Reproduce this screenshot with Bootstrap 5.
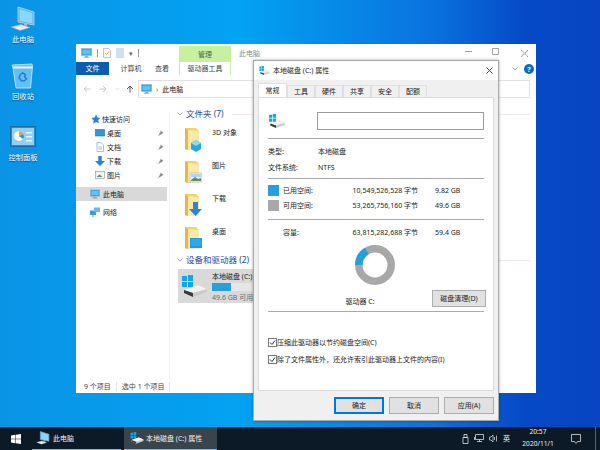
<!DOCTYPE html>
<html lang="zh-CN">
<head>
  <meta charset="UTF-8">
  <title>本地磁盘 (C:) 属性</title>
  <link href="https://cdn.jsdelivr.net/npm/bootstrap@5.3.0/dist/css/bootstrap.min.css" rel="stylesheet">
  <style>
    html, body { height: 100%; margin: 0; }
    body {
      width: 600px; height: 450px; overflow: hidden; position: relative;
      font-family: "Noto Sans", "Noto Sans CJK SC", sans-serif;
      font-size: 7px; line-height: 1; color: #222;
      background: linear-gradient(90deg, #0a94e6 0, #03a2f2 40%, #0a72de 72%, #0549c6 88%, #0745c2 100%);
    }
    svg { display: block; flex: none; }

    /* desktop */
    .desk-icon { position: absolute; left: 0; width: 46px; color: #fff; text-shadow: 0 1px 1px #0008; font-size: 7.3px; }
    .desk-pc { top: 6px; }
    .desk-bin { top: 63px; }
    .desk-cp { top: 124px; }
    .desk-img { width: 26px; height: 26px; margin-bottom: 4px; }

    /* explorer window */
    .xp-win { position: absolute; left: 76px; top: 44px; width: 460px; height: 349px; background: #fff; }
    .xp-title { height: 18px; }
    .xp-qa { width: 103px; padding-left: 5px; gap: 5px; }
    .xp-sep { width: 1px; height: 8px; background: #999; }
    .xp-manage { width: 52px; margin-top: 2px; height: 16px; background: #c7f0a0; color: #4c6a44; }
    .xp-caption { padding-left: 8px; color: #8a8a8a; }
    .win-btn { position: absolute; top: 4px; }
    .btn-min { left: 389px; }
    .btn-max { left: 416px; }
    .btn-close { left: 443px; }
    .xp-tabs { height: 13px; }
    .xp-tab { height: 13px; color: #444; }
    .tab-file { width: 33px; background: #0a5cb0; color: #fff; }
    .tab-pc { width: 44px; }
    .tab-view { width: 18px; }
    .tab-tool { width: 52px; margin-left: 8px; border: 1px solid #cde8b0; border-top: 0; border-bottom: 0; }
    .xp-help { position: absolute; left: 448px; top: 20px; width: 10px; height: 10px; border-radius: 50%; background: #0b6cc4; color: #fff; font-size: 7px; font-weight: 700; }
    .xp-chev { position: absolute; left: 436px; top: 23px; }
    .xp-nav { height: 18px; margin-top: 5px; }
    .nav-arrows { width: 62px; padding-left: 7px; gap: 8px; }
    .nav-up { margin-left: -2px; }
    .addr { width: 392px; height: 18px; border: 1px solid #e4dfe3; padding-left: 2px; gap: 4px; }
    .addr-arrow { color: #666; font-size: 7px; }
    .xp-main { height: 270px; margin-top: 13px; }
    .xp-side { width: 91px; padding-top: 1px; }
    .side-line { width: 1px; margin-left: 2px; background: #f2f2f2; }
    .side-row { height: 14px; gap: 3px; }
    .side-head { padding-left: 15px; gap: 1px; }
    .side-item { padding-left: 19px; padding-right: 1px; gap: 2px; }
    .side-pin { margin-left: auto; margin-right: 2px; }
    .side-pc { margin-top: 5px; padding-left: 14px; background: #d9d9d9; }
    .side-net { margin-top: 4px; padding-left: 14px; }
    .side-img { width: 10px; height: 10px; }
    .xp-body { padding-left: 7px; flex: 1; min-width: 0; margin-top: -3px; }
    .grp-head { height: 12px; margin-bottom: 3px; color: #1f4a9c; font-size: 8.5px; gap: 3px; }
    .grp-line { flex: 1; height: 1px; margin: 0 5px; background: #f0e8ee; }
    .folder-tile { height: 33px; gap: 10px; padding-left: 8px; align-items: flex-start; padding-top: 6px; }
    .folder-img { width: 17px; height: 26px; margin-top: -3px; }
    .grp-devices { margin-top: -1px; margin-bottom: 0; }
    .drive-tile { width: 75px; height: 34px; margin-top: 3px; margin-left: 1px; background: #d9d9d9; padding-left: 3px; gap: 4px; white-space: nowrap; }
    .drive-img { width: 27px; height: 22px; margin-top: 6px; }
    .drive-info { padding-top: 4px; width: 42px; }
    .drive-bar { height: 8px; margin: 3px 0; border-radius: 0; background: #e6e6e6; }
    .drive-bar .progress-bar { background: #26a0da; }
    .drive-free { color: #6d6d6d; }
    .xp-status { height: 14px; padding-left: 8px; color: #444; }
    .status-sep { width: 1px; height: 9px; background: #e3e3e3; margin: 0 5px; }

    /* properties dialog */
    .prop-win { position: absolute; left: 253px; top: 60px; width: 246px; height: 361px; background: #f0f0f0; border: 1px solid #a8a8a8; box-shadow: 0 0 3px #0005; }
    .prop-title { height: 19px; background: #fff; padding-left: 5px; gap: 3px; }
    .prop-close { margin-left: auto; margin-right: 5px; }
    .prop-tabs { margin: 4px 0 0 4px; height: 13px; }
    .prop-tab { width: 28px; height: 12px; margin-top: 1px; background: #f0f0f0; border: 1px solid #e0e0e0; border-bottom: 0; color: #222; }
    .prop-tab.cur { width: 29px; height: 14px; margin-top: -1px; background: #fff; position: relative; z-index: 1; }
    .prop-panel { margin-left: 4px; width: 236px; height: 294px; background: #fff; border: 1px solid #dcdcdc; padding: 14px 9px 0 9px; }
    .prop-drive { height: 18px; }
    .prop-drive-img { width: 18px; height: 14px; margin-right: 31px; }
    .prop-name { width: 168px; height: 18px; border: 1px solid #9b9b9b; }
    .prop-sep { height: 1px; background: #a9a9a9; width: 216px; }
    .sep-a { margin-top: 8px; margin-bottom: 4px; }
    .sep-b { margin-top: 3px; margin-bottom: 4px; }
    .sep-c { margin-top: 6px; margin-bottom: 5px; }
    .info-row { height: 16px; }
    .info-key { width: 50px; }
    .space-row { height: 15px; }
    .swatch { width: 11px; height: 11px; margin-right: 4px; }
    .sw-used { background: #26a0da; }
    .sw-free { background: #a8a8a8; }
    .sp-name { width: 50px; }
    .sp-val { width: 85px; text-align: right; }
    .sp-gb { margin-left: 17px; }
    .sp-blank { width: 15px; }
    .donut-wrap { width: 216px; margin-top: 5px; padding-right: 2px; }
    .clean-row { height: 17px; margin-top: 5px; width: 218px; }
    .clean-label { width: 164px; padding-left: 20px; padding-top: 8px; }
    .clean-btn { width: 54px; height: 17px; padding: 0; border-radius: 0; font-size: 7px; background: #e1e1e1; border: 1px solid #adadad; color: #222; line-height: 1; }
    .sep-d { margin-top: 4px; }
    .chk-row { height: 17px; }
    .chk-first { margin-top: 22px; }
    .chk-box { width: 9px; height: 9px; border: 1px solid #777; background: #fff; }
    .prop-foot { margin-top: 6px; padding-right: 4px; gap: 5px; }
    .foot-btn { width: 50px; height: 17px; padding: 0; border-radius: 0; font-size: 7px; background: #e1e1e1; border: 1px solid #adadad; color: #222; line-height: 1; }
    .foot-ok { border: 2px solid #0078d7; }

    /* taskbar */
    .taskbar { position: absolute; left: 0; right: 0; bottom: 0; height: 23px; background: #0b1a26; color: #f2f2f2; }
    .tb-start { width: 29px; padding-left: 3px; }
    .tb-item { height: 23px; gap: 3px; border-bottom: 1px solid #76b9ed; margin-left: 3px; }
    .tb-pc { width: 89px; padding-left: 4px; }
    .tb-prop { width: 93px; padding-left: 6px; gap: 2px; background: #39444c; }
    .tb-tray { margin-left: auto; gap: 5px; }
    .tb-clock { width: 40px; gap: 5px; margin: 0 8px 0 3px; font-size: 6.6px; }
    .tb-end { width: 5px; height: 23px; margin-left: 9px; border-left: 1px solid #55616b; }
  </style>
</head>
<body>
  <svg width="0" height="0" class="position-absolute">
    <defs>
      <symbol id="i-pc" viewBox="0 0 16 14">
        <rect x=".5" y=".5" width="15" height="10" fill="#1f9ae0" stroke="#9fb6c6"/>
        <path d="M2 2h12v7H2z" fill="#5cc3f2"/>
        <path d="M6 11h4v1.5H6zM4 12.5h8V14H4z" fill="#9aa4ac"/>
      </symbol>
      <symbol id="i-pc-big" viewBox="0 0 26 26">
        <path d="M8 1l16 5v13l-16-3z" fill="#4fb4ee" stroke="#c9d5df" stroke-width=".8"/>
        <path d="M9.500 3l13 4v10.500l-13-2.500z" fill="#8ed6f8"/>
        <path d="M14 17.500l3 .6v2l-3-.6z" fill="#aeb9c2"/>
        <path d="M1 21l10-2.500 9 3-10 3z" fill="#e8ecef" stroke="#9aa4ac" stroke-width=".5"/>
      </symbol>
      <symbol id="i-bin" viewBox="0 0 26 26">
        <path d="M2 2l20-1 .5 3-2 21H6L3 5z" fill="#9fdcf8" fill-opacity=".6" stroke="#e6f5fd" stroke-width=".7"/>
        <path d="M2.500 3.500h20l-.5 2H3z" fill="#e9f6fd"/>
        <path d="M12.500 10l3 1.500-1 2 2 2.500-2.500 2-3-.5-2-3 1.500-3z" fill="none" stroke="#1f7fd0" stroke-width="1.500"/>
      </symbol>
      <symbol id="i-cp" viewBox="0 0 26 22">
        <rect x=".5" y=".5" width="25" height="20" fill="#2a8cc8" stroke="#1a6aa4"/>
        <rect x="2" y="2" width="22" height="17" fill="#8fd0f4"/>
        <circle cx="9" cy="10" r="5" fill="#fff"/>
        <path d="M9 10V5a5 5 0 0 1 4.500 3z" fill="#f0a030"/>
        <path d="M9 10l4.500-2A5 5 0 0 1 13 13z" fill="#2a8fd8"/>
        <path d="M16 6h6v1.500h-6zM16 10h6v1.500h-6zM16 14h6v1.500h-6z" fill="#e4f4fc"/>
      </symbol>
      <symbol id="i-folder" viewBox="0 0 17 26">
        <path d="M0 2h11l3 3v19H3l-3-1z" fill="#f4d264"/>
        <path d="M3 4l11 1v19H3z" fill="#fbe9a8"/>
        <path d="M0 2l3 2v20l-3-1z" fill="#e2b84a"/>
      </symbol>
      <symbol id="i-drive" viewBox="0 0 27 22">
        <path d="M1 1h5v5H1zM7 0l5-.5V6H7zM1 7h5v5H1zM7 7h5v5.500l-5-.5z" fill="#12a5e8"/>
        <path d="M3 15l14-5 9 4v3L12 22l-9-4z" fill="#c9c9c9"/>
        <path d="M3 15l9 3 14-4-9-4z" fill="#f2f2f2"/>
        <path d="M3 15l9 3v4l-9-4z" fill="#3b3b3b"/>
      </symbol>
      <symbol id="i-win" viewBox="0 0 10 10">
        <path d="M0 1.400l4.300-.6v3.900H0zM4.800.7L10 0v4.700H4.800zM0 5.300h4.300v3.900L0 8.600zM4.800 5.300H10V10l-5.200-.7z" fill="#fff"/>
      </symbol>
      <symbol id="i-pin" viewBox="0 0 8 8">
        <path d="M4 .5l3.500 3-1.500.5-1.500 1.500-.5-.5L1 7.500l2-3.500-.5-.5L4 2.500z" fill="#8a8a8a"/>
      </symbol>
      <symbol id="i-star" viewBox="0 0 10 10">
        <path d="M5 .5l1.400 3 3.100.4-2.300 2.100.7 3.300L5 8.100 2.100 9.800l.7-3.300L.5 3.900l3.100-.4z" fill="#2b7fd6"/>
      </symbol>
      <symbol id="i-screen" viewBox="0 0 10 8">
        <rect x=".5" y=".5" width="9" height="6.500" fill="#2f96e4" stroke="#1c6cb4" stroke-width=".6"/>
      </symbol>
      <symbol id="i-doc" viewBox="0 0 10 10">
        <path d="M2 .5h4l2.500 2.500v6.500H2z" fill="#fff" stroke="#8aa8c4" stroke-width=".7"/>
        <path d="M3.500 5h3.500M3.500 7h3.500" stroke="#6aa0d0" stroke-width=".7"/>
      </symbol>
      <symbol id="i-props" viewBox="0 0 8 10">
        <path d="M.5.500h5l2 2v7h-7z" fill="#fff" stroke="#a8a8a8" stroke-width=".7"/>
        <path d="M2 5l1.500 1.500L6 3.500" fill="none" stroke="#e08a30" stroke-width=".9"/>
      </symbol>
      <symbol id="i-page" viewBox="0 0 8 10">
        <path d="M0 0h8v10H0z" fill="#cfe0f2"/>
      </symbol>
      <symbol id="i-down" viewBox="0 0 10 10">
        <path d="M3.300 0h3.400v5H10L5 10 0 5h3.300z" fill="#2b7fd6"/>
      </symbol>
      <symbol id="i-pic" viewBox="0 0 10 8">
        <rect x=".5" y=".5" width="9" height="7" fill="#f4f4f4" stroke="#8d8d8d" stroke-width=".6"/>
        <path d="M1.500 6l3-2.500 3 2.500z" fill="#5e8a9c"/>
      </symbol>
      <symbol id="i-net" viewBox="0 0 10 9">
        <rect x="0" y="3" width="6" height="4.500" fill="#3c9be0"/>
        <rect x="4" y="0" width="6" height="4.500" fill="#68b9ee"/>
        <path d="M2 8h2v1H2z" fill="#888"/>
      </symbol>
    </defs>
  </svg>

  <div class="desk-icon desk-pc d-flex flex-column align-items-center">
    <svg class="desk-img"><use href="#i-pc-big"/></svg>
    <span>此电脑</span>
  </div>
  <div class="desk-icon desk-bin d-flex flex-column align-items-center">
    <svg class="desk-img"><use href="#i-bin"/></svg>
    <span>回收站</span>
  </div>
  <div class="desk-icon desk-cp d-flex flex-column align-items-center">
    <svg class="desk-img"><use href="#i-cp"/></svg>
    <span>控制面板</span>
  </div>

  <div class="xp-win d-flex flex-column">
    <div class="xp-title d-flex align-items-stretch">
      <div class="xp-qa d-flex align-items-center">
        <svg width="11" height="10"><use href="#i-pc"/></svg>
        <div class="xp-sep"></div>
        <svg width="8" height="10"><use href="#i-props"/></svg>
        <svg width="8" height="10"><use href="#i-page"/></svg>
        <span class="addr-arrow">▾</span>
        <div class="xp-sep"></div>
      </div>
      <div class="xp-manage d-flex align-items-center justify-content-center">管理</div>
      <div class="xp-caption d-flex align-items-center">此电脑</div>
    </div>
    <svg class="win-btn btn-min" width="7" height="7" viewBox="0 0 7 7"><path d="M0 3.500h7" stroke="#8a8a8a" stroke-width=".8"/></svg>
    <svg class="win-btn btn-max" width="7" height="7" viewBox="0 0 7 7"><path d="M.5.500h6v6h-6z" fill="none" stroke="#8a8a8a" stroke-width=".8"/></svg>
    <svg class="win-btn btn-close" width="7" height="7" viewBox="0 0 7 7"><path d="M.5.500l6 6M6.500.500l-6 6" stroke="#b0b0b0" stroke-width=".8"/></svg>
    <div class="xp-tabs d-flex">
      <div class="xp-tab tab-file d-flex align-items-center justify-content-center">文件</div>
      <div class="xp-tab tab-pc d-flex align-items-center justify-content-center">计算机</div>
      <div class="xp-tab tab-view d-flex align-items-center justify-content-center">查看</div>
      <div class="xp-tab tab-tool d-flex align-items-center justify-content-center">驱动器工具</div>
    </div>
    <svg class="xp-chev" width="6" height="4" viewBox="0 0 6 4"><path d="M.5.500L3 3 5.500.500" fill="none" stroke="#888" stroke-width=".8"/></svg>
    <div class="xp-help d-flex align-items-center justify-content-center">?</div>
    <div class="xp-nav d-flex">
      <div class="nav-arrows d-flex align-items-center">
        <svg width="8" height="8" viewBox="0 0 8 8"><path d="M7.500 4H1M4 1L1 4l3 3" fill="none" stroke="#ccc"/></svg>
        <svg width="8" height="8" viewBox="0 0 8 8"><path d="M.5 4H7M4 1l3 3-3 3" fill="none" stroke="#ccc"/></svg>
        <svg width="5" height="8" viewBox="0 0 5 8"><path d="M.5 3L2.500 5 4.500 3" fill="none" stroke="#ccc" stroke-width=".7"/></svg>
        <svg class="nav-up" width="8" height="8" viewBox="0 0 8 8"><path d="M4 7.500V1M1 4l3-3 3 3" fill="none" stroke="#555"/></svg>
      </div>
      <div class="addr d-flex align-items-center">
        <svg width="11" height="10"><use href="#i-pc"/></svg>
        <span class="addr-arrow">›</span>
        <span>此电脑</span>
      </div>
    </div>
    <div class="xp-main d-flex">
      <div class="xp-side">
        <div class="side-row side-head d-flex align-items-center">
          <svg class="side-img"><use href="#i-star"/></svg><span>快速访问</span>
        </div>
        <div class="side-row side-item d-flex align-items-center">
          <svg class="side-img"><use href="#i-screen"/></svg><span>桌面</span>
          <svg class="side-pin" width="7" height="7"><use href="#i-pin"/></svg>
        </div>
        <div class="side-row side-item d-flex align-items-center">
          <svg class="side-img"><use href="#i-doc"/></svg><span>文档</span>
          <svg class="side-pin" width="7" height="7"><use href="#i-pin"/></svg>
        </div>
        <div class="side-row side-item d-flex align-items-center">
          <svg class="side-img"><use href="#i-down"/></svg><span>下载</span>
          <svg class="side-pin" width="7" height="7"><use href="#i-pin"/></svg>
        </div>
        <div class="side-row side-item d-flex align-items-center">
          <svg class="side-img"><use href="#i-pic"/></svg><span>图片</span>
          <svg class="side-pin" width="7" height="7"><use href="#i-pin"/></svg>
        </div>
        <div class="side-row side-pc d-flex align-items-center">
          <svg class="side-img"><use href="#i-pc"/></svg><span>此电脑</span>
        </div>
        <div class="side-row side-net d-flex align-items-center">
          <svg class="side-img"><use href="#i-net"/></svg><span>网络</span>
        </div>
      </div>
      <div class="side-line"></div>
      <div class="xp-body">
        <div class="grp-head d-flex align-items-center">
          <svg width="6" height="4" viewBox="0 0 6 4"><path d="M.5.500L3 3 5.500.500" fill="none" stroke="#888" stroke-width=".8"/></svg>
          <span>文件夹 (7)</span><div class="grp-line"></div>
        </div>
        <div class="folder-tile d-flex">
          <svg class="folder-img" viewBox="0 0 17 26"><use href="#i-folder"/><path d="M6 17l5-3 5 3v6l-5 3-5-3z" fill="#27a8dc"/><path d="M6 17l5 3 5-3-5-3z" fill="#8fdcf4"/></svg>
          <span>3D 对象</span>
        </div>
        <div class="folder-tile d-flex">
          <svg class="folder-img" viewBox="0 0 17 26"><use href="#i-folder"/><rect x="5" y="14" width="12" height="9" fill="#eef2f4" stroke="#9aa"  stroke-width=".5"/><path d="M6 21l4-3 3 2 3-1v3H6z" fill="#5f8c80"/><path d="M6 15h10v3H6z" fill="#b4d6ec"/></svg>
          <span>图片</span>
        </div>
        <div class="folder-tile d-flex">
          <svg class="folder-img" viewBox="0 0 17 26"><use href="#i-folder"/><path d="M8 10h5v7h4l-6.500 7L4 17h4z" fill="#2b82d8"/></svg>
          <span>下载</span>
        </div>
        <div class="folder-tile d-flex">
          <svg class="folder-img" viewBox="0 0 17 26"><use href="#i-folder"/><rect x="5" y="13" width="12" height="10" fill="#1f9ae8"/><path d="M6 14h10v7H6z" fill="#2fa8f0"/></svg>
          <span>桌面</span>
        </div>
        <div class="grp-head grp-devices d-flex align-items-center">
          <svg width="6" height="4" viewBox="0 0 6 4"><path d="M.5.500L3 3 5.500.500" fill="none" stroke="#888" stroke-width=".8"/></svg>
          <span>设备和驱动器 (2)</span><div class="grp-line"></div>
        </div>
        <div class="drive-tile d-flex">
          <svg class="drive-img"><use href="#i-drive"/></svg>
          <div class="drive-info">
            <div>本地磁盘 (C:)</div>
            <div class="progress drive-bar">
              <div class="progress-bar" style="width: 45%"></div>
            </div>
            <div class="drive-free">49.6 GB 可用</div>
          </div>
        </div>
      </div>
    </div>
    <div class="xp-status d-flex align-items-center">
      <span>9 个项目</span><div class="status-sep"></div><span>选中 1 个项目</span><div class="status-sep"></div>
    </div>
  </div>

  <div class="prop-win d-flex flex-column">
    <div class="prop-title d-flex align-items-center">
      <svg width="11" height="9"><use href="#i-drive"/></svg>
      <span>本地磁盘 (C:) 属性</span>
      <svg class="prop-close" width="7" height="7" viewBox="0 0 7 7"><path d="M.5.500l6 6M6.500.500l-6 6" stroke="#333" stroke-width=".9"/></svg>
    </div>
    <div class="prop-tabs d-flex">
      <div class="prop-tab cur d-flex align-items-center justify-content-center">常规</div>
      <div class="prop-tab d-flex align-items-center justify-content-center">工具</div>
      <div class="prop-tab d-flex align-items-center justify-content-center">硬件</div>
      <div class="prop-tab d-flex align-items-center justify-content-center">共享</div>
      <div class="prop-tab d-flex align-items-center justify-content-center">安全</div>
      <div class="prop-tab d-flex align-items-center justify-content-center">配额</div>
    </div>
    <div class="prop-panel">
      <div class="prop-drive d-flex align-items-center">
        <svg class="prop-drive-img"><use href="#i-drive"/></svg>
        <div class="prop-name"></div>
      </div>
      <div class="prop-sep sep-a"></div>
      <div class="info-row d-flex align-items-center"><span class="info-key">类型:</span><span>本地磁盘</span></div>
      <div class="info-row d-flex align-items-center"><span class="info-key">文件系统:</span><span>NTFS</span></div>
      <div class="prop-sep sep-b"></div>
      <div class="space-row d-flex align-items-center">
        <div class="swatch sw-used"></div><span class="sp-name">已用空间:</span>
        <span class="sp-val">10,549,526,528 字节</span><span class="sp-gb">9.82 GB</span>
      </div>
      <div class="space-row d-flex align-items-center">
        <div class="swatch sw-free"></div><span class="sp-name">可用空间:</span>
        <span class="sp-val">53,265,756,160 字节</span><span class="sp-gb">49.6 GB</span>
      </div>
      <div class="prop-sep sep-c"></div>
      <div class="space-row d-flex align-items-center">
        <div class="sp-blank"></div><span class="sp-name">容量:</span>
        <span class="sp-val">63,815,282,688 字节</span><span class="sp-gb">59.4 GB</span>
      </div>
      <div class="donut-wrap d-flex justify-content-center">
        <svg width="40" height="40" viewBox="0 0 40 40">
          <circle cx="20" cy="20" r="16.200" fill="none" stroke="#a8a8a8" stroke-width="7.500"/>
          <circle cx="20" cy="20" r="16.200" fill="none" stroke="#26a0da" stroke-width="7.500" stroke-dasharray="16.800 120" transform="rotate(180 20 20)"/>
        </svg>
      </div>
      <div class="clean-row d-flex">
        <div class="clean-label text-center">驱动器 C:</div>
        <button type="button" class="btn clean-btn">磁盘清理(D)</button>
      </div>
      <div class="prop-sep sep-d"></div>
      <div class="chk-row chk-first d-flex align-items-center"><div class="chk-box d-flex align-items-center justify-content-center"><svg width="7" height="7" viewBox="0 0 7 7"><path d="M1 3.500l2 2L6 1.500" fill="none" stroke="#333"/></svg></div><span>压缩此驱动器以节约磁盘空间(C)</span></div>
      <div class="chk-row d-flex align-items-center"><div class="chk-box d-flex align-items-center justify-content-center"><svg width="7" height="7" viewBox="0 0 7 7"><path d="M1 3.500l2 2L6 1.500" fill="none" stroke="#333"/></svg></div><span>除了文件属性外，还允许索引此驱动器上文件的内容(I)</span></div>
    </div>
    <div class="prop-foot d-flex justify-content-end">
      <button type="button" class="btn foot-btn foot-ok">确定</button>
      <button type="button" class="btn foot-btn">取消</button>
      <button type="button" class="btn foot-btn">应用(A)</button>
    </div>
  </div>

  <div class="taskbar d-flex align-items-center">
    <div class="tb-start d-flex align-items-center justify-content-center">
      <svg width="10" height="10"><use href="#i-win"/></svg>
    </div>
    <div class="tb-item tb-pc d-flex align-items-center">
      <svg width="14" height="14"><use href="#i-pc-big"/></svg><span>此电脑</span>
    </div>
    <div class="tb-item tb-prop d-flex align-items-center">
      <svg width="14" height="12"><use href="#i-drive"/></svg><span>本地磁盘 (C:) 属性</span>
    </div>
    <div class="tb-tray d-flex align-items-center">
      <svg width="7" height="10" viewBox="0 0 7 10"><path d="M2 .5h3v3H2zM1 3.500h5v6H1z" fill="none" stroke="#ddd" stroke-width=".8"/></svg>
      <svg width="10" height="9" viewBox="0 0 10 9"><path d="M1.500.500h8v5h-8zM5.500 5.500v2M3 7.500h5M.5 3v3" fill="none" stroke="#ddd" stroke-width=".8"/></svg>
      <svg width="9" height="9" viewBox="0 0 9 9"><path d="M.5 3h1.500l2-2v7l-2-2H.5zM5.500 3v3M7.500 1.500v6" fill="none" stroke="#ccc" stroke-width=".8"/></svg>
      <span>英</span>
      <div class="tb-clock d-flex flex-column align-items-center"><span>20:57</span><span>2020/11/1</span></div>
      <svg width="10" height="10" viewBox="0 0 10 10"><path d="M.5.500h9v7H6.500L5 9.500 3.500 7.500h-3z" fill="none" stroke="#ddd" stroke-width=".8"/></svg>
      <div class="tb-end"></div>
    </div>
  </div>
  <script src="https://cdn.jsdelivr.net/npm/bootstrap@5.3.0/dist/js/bootstrap.bundle.min.js"></script>
</body>
</html>
